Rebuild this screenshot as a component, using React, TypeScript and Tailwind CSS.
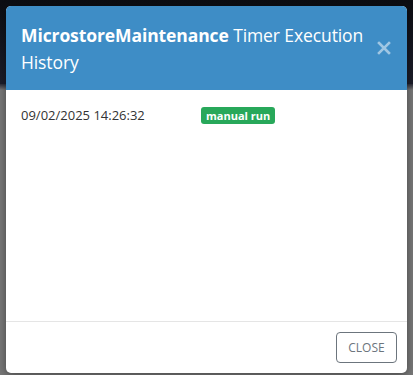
import React from 'react';

export default function App() {
  return (
    <div className="relative w-[413px] h-[375px] overflow-hidden bg-[#777777] font-['Open_Sans',sans-serif]">
      {/* Darkened page behind the modal */}
      <div className="absolute inset-x-0 top-0 h-[88px] bg-gradient-to-b from-[#0c0d12] via-[#14151f] to-[#1d1e2b]" />
      <div className="absolute inset-x-0 top-[84px] h-[6px] bg-gradient-to-b from-[#2a2b36] to-[#777777]" />

      {/* Modal */}
      <div className="relative mx-[6px] mt-[6px] h-[367px] flex flex-col bg-white rounded-[5px] overflow-hidden shadow-[0_2px_8px_rgba(0,0,0,0.4)]">
        <div className="flex items-start justify-between bg-[#3e8dc6] pl-[15px] pr-[16px] pt-[16px] h-[84px]">
          <h4 className="text-white text-[17.5px] leading-[27px] tracking-[-0.1px]">
            <span className="font-bold">MicrostoreMaintenance</span> Timer Execution History
          </h4>
          <button className="mt-[19px] ml-[10px] shrink-0 text-white/50">
            <svg width="14" height="14" viewBox="0 0 14 14">
              <path d="M2 2 L12 12 M12 2 L2 12" stroke="currentColor" strokeWidth="2.6" strokeLinecap="square" />
            </svg>
          </button>
        </div>

        <div className="flex-1 px-[15px] pt-[16px]">
          <div className="flex items-center">
            <span className="w-[180px] text-[13px] text-[#333333]">09/02/2025 14:26:32</span>
            <span className="rounded-[3px] bg-[#28a85a] px-[5px] text-[11px] font-bold leading-[17px] text-white">
              manual run
            </span>
          </div>
        </div>

        <div className="flex justify-end border-t border-[#e5e5e5] px-[10px] pt-[10px] pb-[10px]">
          <button className="h-[31px] w-[61px] rounded-[4px] border border-[#6c757d] text-[12px] text-[#6c757d]">
            CLOSE
          </button>
        </div>
      </div>
    </div>
  );
}
